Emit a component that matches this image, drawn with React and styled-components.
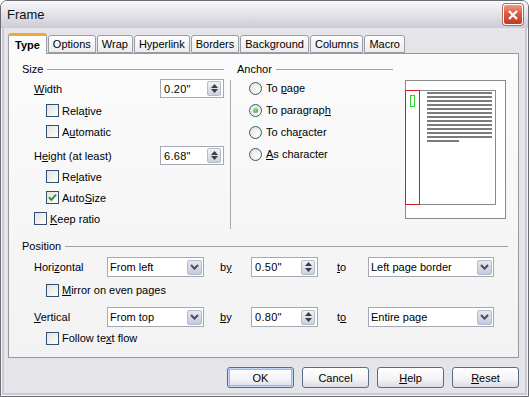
import React from "react";
import styled, { createGlobalStyle } from "styled-components";

const GlobalStyle = createGlobalStyle`
  html, body {
    margin: 0;
    padding: 0;
    background: #ffffff;
  }
  body {
    font-family: "Liberation Sans", Arial, sans-serif;
    font-size: 11px;
    color: #000;
  }
  u {
    text-decoration: underline;
    text-underline-offset: 1px;
  }
`;

const Window = styled.div`
  width: 529px;
  height: 397px;
  box-sizing: border-box;
  border: 1px solid #6c6c74;
  border-radius: 7px 7px 0 0;
  background: #e4e4e9;
  box-shadow: inset 0 0 0 1px #f6f6f8, inset 0 0 0 3px #cacad2;
  display: flex;
  flex-direction: column;
  overflow: hidden;
`;

const TitleBar = styled.div`
  height: 27px;
  flex-shrink: 0;
  display: flex;
  align-items: center;
  justify-content: space-between;
  padding-left: 6px;
  padding-right: 5px;
  background: linear-gradient(#fbfbfd 0%, #ececf1 25%, #dedee5 60%, #cbcbd4 100%);
`;

const Title = styled.span`
  font-size: 13px;
  color: #111;
`;

const CloseButton = styled.div`
  width: 20px;
  height: 21px;
  box-sizing: border-box;
  border: 1px solid #ffffff;
  border-radius: 3px;
  box-shadow: 0 0 0 1px #b86a60;
  background: linear-gradient(#ec9a86 0%, #dc5c44 45%, #c13a26 100%);
  display: flex;
  align-items: center;
  justify-content: center;
`;

const Body = styled.div`
  flex: 1;
  display: flex;
  flex-direction: column;
  padding: 5px 9px 0 7px;
`;

const TabStrip = styled.div`
  display: flex;
  align-items: flex-end;
  height: 20px;
  gap: 1px;
`;

const Tab = styled.div`
  position: relative;
  z-index: ${(p) => (p.$active ? 1 : 0)};
  box-sizing: border-box;
  height: ${(p) => (p.$active ? "21px" : "18px")};
  margin-bottom: ${(p) => (p.$active ? "-1px" : "0")};
  padding: 0 ${(p) => (p.$active ? "6px" : "4px")};
  display: flex;
  align-items: center;
  font-weight: ${(p) => (p.$active ? 700 : 400)};
  border: 1px solid #969ea6;
  border-bottom: ${(p) => (p.$active ? "none" : "1px solid #969ea6")};
  border-top: ${(p) => (p.$active ? "3px solid #f0a83a" : "1px solid #969ea6")};
  border-radius: 3px 3px 0 0;
  background: ${(p) =>
    p.$active ? "#fbfbfb" : "linear-gradient(#fefefe, #ececef)"};
`;

const Panel = styled.div`
  box-sizing: border-box;
  height: 305px;
  border: 1px solid #919b9c;
  background: linear-gradient(#fbfbfb, #f2f2f2);
  padding: 9px 10px 0 13px;
  display: flex;
  flex-direction: column;
`;

const TopArea = styled.div`
  display: flex;
`;

const Column = styled.div`
  width: ${(p) => p.$width}px;
  display: flex;
  flex-direction: column;
`;

const Separator = styled.div`
  width: 1px;
  margin: 17px 6px 0;
  background: #a9a9ad;
`;

const SectionHead = styled.div`
  height: 13px;
  display: flex;
  align-items: center;
  line-height: 13px;
  &::after {
    content: "";
    flex: 1;
    height: 1px;
    margin-left: 4px;
    background: #a2a2a6;
  }
`;

const FieldRow = styled.div`
  height: 19px;
  margin-top: ${(p) => p.$top}px;
  padding-left: 12px;
  display: flex;
  align-items: center;
  justify-content: space-between;
`;

const SpinField = styled.div`
  box-sizing: border-box;
  width: ${(p) => p.$width}px;
  height: ${(p) => p.$height || 19}px;
  border: 1px solid #a3aab3;
  background: #ffffff;
  display: flex;
  align-items: center;
  justify-content: space-between;
  padding: 0 2px 0 3px;
  letter-spacing: 0.3px;
`;

const SpinButton = styled.div`
  box-sizing: border-box;
  width: 14px;
  height: 15px;
  border: 1px solid #b4bccc;
  border-radius: 2px;
  background: linear-gradient(#f1f2f7, #cdd1de);
  display: flex;
  flex-direction: column;
  align-items: center;
  justify-content: space-around;
  padding: 1px 0;
`;

const CheckRow = styled.div`
  height: ${(p) => p.$height || 21}px;
  margin-top: ${(p) => p.$top || 0}px;
  padding-left: ${(p) => p.$indent}px;
  display: flex;
  align-items: center;
  gap: 3px;
`;

const Box = styled.div`
  box-sizing: border-box;
  width: 13px;
  height: 13px;
  border: 1px solid #33506e;
  background: linear-gradient(135deg, #e2e2e0, #fdfdfd);
  display: flex;
  align-items: center;
  justify-content: center;
`;

const RadioRow = styled.div`
  height: 22px;
  margin-top: ${(p) => p.$top || 0}px;
  padding-left: 12px;
  display: flex;
  align-items: center;
  gap: 4px;
`;

const Radio = styled.div`
  box-sizing: border-box;
  width: 13px;
  height: 13px;
  border-radius: 50%;
  border: 1px solid #3d5873;
  background: radial-gradient(circle at 65% 65%, #fefefe, #dcdcda);
  display: flex;
  align-items: center;
  justify-content: center;
  &::after {
    content: "";
    display: ${(p) => (p.$checked ? "block" : "none")};
    width: 5px;
    height: 5px;
    border-radius: 50%;
    background: radial-gradient(circle at 35% 35%, #8ee28e, #24a024);
  }
`;

const PreviewBox = styled.div`
  margin: 17px 0 0 12px;
  width: 101px;
  height: 139px;
`;

const PositionSection = styled.div`
  margin-top: 11px;
  display: flex;
  flex-direction: column;
`;

const PosRow = styled.div`
  height: 20px;
  margin-top: ${(p) => p.$top}px;
  padding-left: 12px;
  display: flex;
  align-items: center;
`;

const PosLabel = styled.span`
  width: 73px;
`;

const Word = styled.span`
  width: 31px;
  margin-left: ${(p) => p.$gap}px;
`;

const Select = styled.div`
  box-sizing: border-box;
  width: ${(p) => p.$width}px;
  height: 20px;
  border: 1px solid #a3aab3;
  background: #ffffff;
  display: flex;
  align-items: center;
  justify-content: space-between;
  padding: 0 1px 0 2px;
`;

const DropButton = styled.div`
  box-sizing: border-box;
  width: 15px;
  height: 15px;
  border: 1px solid #b3bbd0;
  border-radius: 2px;
  background: linear-gradient(#e6e9f3, #c4cadb);
  display: flex;
  align-items: center;
  justify-content: center;
`;

const ButtonRow = styled.div`
  margin-top: 9px;
  display: flex;
  justify-content: flex-end;
  gap: 8px;
`;

const Button = styled.div`
  box-sizing: border-box;
  width: 67px;
  height: 21px;
  border: 1px solid #5a6b88;
  border-radius: 3px;
  background: linear-gradient(#ffffff 0%, #f3f3f6 60%, #dadae2 100%);
  box-shadow: ${(p) =>
    p.$primary ? "inset 0 0 0 1px #c6d6f6, inset 0 0 0 2px #9db6e6" : "none"};
  display: flex;
  align-items: center;
  justify-content: center;
`;

const Check = () => (
  <svg width="9" height="9" viewBox="0 0 9 9">
    <path d="M1 4.3 L3.4 6.8 L8 1.6" fill="none" stroke="#21a121" strokeWidth="2" />
  </svg>
);

const Arrows = () => (
  <>
    <svg width="7" height="4" viewBox="0 0 7 4">
      <path d="M0 4 L3.5 0 L7 4 Z" fill="#3b3b45" />
    </svg>
    <svg width="7" height="4" viewBox="0 0 7 4">
      <path d="M0 0 L3.5 4 L7 0 Z" fill="#3b3b45" />
    </svg>
  </>
);

const Chevron = () => (
  <svg width="9" height="6" viewBox="0 0 9 6">
    <path d="M1 1 L4.5 4.6 L8 1" fill="none" stroke="#4a4a58" strokeWidth="2" />
  </svg>
);

function Spin({ value, width, height }) {
  return (
    <SpinField $width={width} $height={height}>
      <span>{value}</span>
      <SpinButton>
        <Arrows />
      </SpinButton>
    </SpinField>
  );
}

function Combo({ value, width }) {
  return (
    <Select $width={width}>
      <span>{value}</span>
      <DropButton>
        <Chevron />
      </DropButton>
    </Select>
  );
}

function CheckItem({ children, checked, ...rest }) {
  return (
    <CheckRow {...rest}>
      <Box>{checked && <Check />}</Box>
      <span>{children}</span>
    </CheckRow>
  );
}

function RadioItem({ children, checked, top }) {
  return (
    <RadioRow $top={top}>
      <Radio $checked={checked} />
      <span>{children}</span>
    </RadioRow>
  );
}

function Preview() {
  const lines = Array.from({ length: 12 }, (_, i) => 12 + i * 4);
  return (
    <PreviewBox>
      <svg width="101" height="139" viewBox="0 0 101 139">
        <rect x="0.5" y="0.5" width="100" height="138" fill="#ffffff" stroke="#8a8a8a" />
        <rect x="0.5" y="10.5" width="90" height="114" fill="#ffffff" stroke="#8a8a8a" />
        {lines.map((y) => (
          <rect key={y} x="22" y={y} width="65" height="2" fill="#7c7c7c" />
        ))}
        <rect x="22" y="60" width="32" height="2" fill="#7c7c7c" />
        <rect x="0.5" y="10.5" width="14" height="114" fill="none" stroke="#cc1f1f" />
        <rect x="5.5" y="15.5" width="4" height="11" fill="none" stroke="#2fd12f" />
      </svg>
    </PreviewBox>
  );
}

const tabs = ["Type", "Options", "Wrap", "Hyperlink", "Borders", "Background", "Columns", "Macro"];

export default function App() {
  return (
    <>
      <GlobalStyle />
      <Window>
        <TitleBar>
          <Title>Frame</Title>
          <CloseButton>
            <svg width="10" height="10" viewBox="0 0 10 10">
              <path d="M1 1 L9 9 M9 1 L1 9" stroke="#ffffff" strokeWidth="2.2" />
            </svg>
          </CloseButton>
        </TitleBar>
        <Body>
          <TabStrip>
            {tabs.map((t, i) => (
              <Tab key={t} $active={i === 0}>
                {t}
              </Tab>
            ))}
          </TabStrip>
          <Panel>
            <TopArea>
              <Column $width={202}>
                <SectionHead>Size</SectionHead>
                <FieldRow $top={3}>
                  <span>
                    <u>W</u>idth
                  </span>
                  <Spin value={'0.20"'} width={64} />
                </FieldRow>
                <CheckItem $indent={24} $top={2}>
                  Rela<u>t</u>ive
                </CheckItem>
                <CheckItem $indent={24}>
                  A<u>u</u>tomatic
                </CheckItem>
                <FieldRow $top={4}>
                  <span>
                    H<u>e</u>ight (at least)
                  </span>
                  <Spin value={'6.68"'} width={64} />
                </FieldRow>
                <CheckItem $indent={24} $top={1}>
                  Re<u>l</u>ative
                </CheckItem>
                <CheckItem $indent={24} checked>
                  Auto<u>S</u>ize
                </CheckItem>
                <CheckItem $indent={12}>
                  <u>K</u>eep ratio
                </CheckItem>
              </Column>
              <Separator />
              <Column $width={156}>
                <SectionHead>Anchor</SectionHead>
                <RadioItem top={1}>
                  To <u>p</u>age
                </RadioItem>
                <RadioItem checked>
                  To paragrap<u>h</u>
                </RadioItem>
                <RadioItem>
                  To cha<u>r</u>acter
                </RadioItem>
                <RadioItem>
                  <u>A</u>s character
                </RadioItem>
              </Column>
              <Preview />
            </TopArea>
            <PositionSection>
              <SectionHead>Position</SectionHead>
              <PosRow $top={4}>
                <PosLabel>
                  Hori<u>z</u>ontal
                </PosLabel>
                <Combo value="From left" width={97} />
                <Word $gap={16}>
                  b<u>y</u>
                </Word>
                <Spin value={'0.50"'} width={67} height={20} />
                <Word $gap={19}>
                  <u>t</u>o
                </Word>
                <Combo value="Left page border" width={126} />
              </PosRow>
              <CheckItem $indent={24} $top={2} $height={22}>
                <u>M</u>irror on even pages
              </CheckItem>
              <PosRow $top={6}>
                <PosLabel>
                  <u>V</u>ertical
                </PosLabel>
                <Combo value="From top" width={97} />
                <Word $gap={16}>
                  <u>b</u>y
                </Word>
                <Spin value={'0.80"'} width={67} height={20} />
                <Word $gap={19}>
                  t<u>o</u>
                </Word>
                <Combo value="Entire page" width={126} />
              </PosRow>
              <CheckItem $indent={24} $height={22}>
                Follow te<u>x</u>t flow
              </CheckItem>
            </PositionSection>
          </Panel>
          <ButtonRow>
            <Button $primary>OK</Button>
            <Button>Cancel</Button>
            <Button>
              <u>H</u>elp
            </Button>
            <Button>
              <u>R</u>eset
            </Button>
          </ButtonRow>
        </Body>
      </Window>
    </>
  );
}
